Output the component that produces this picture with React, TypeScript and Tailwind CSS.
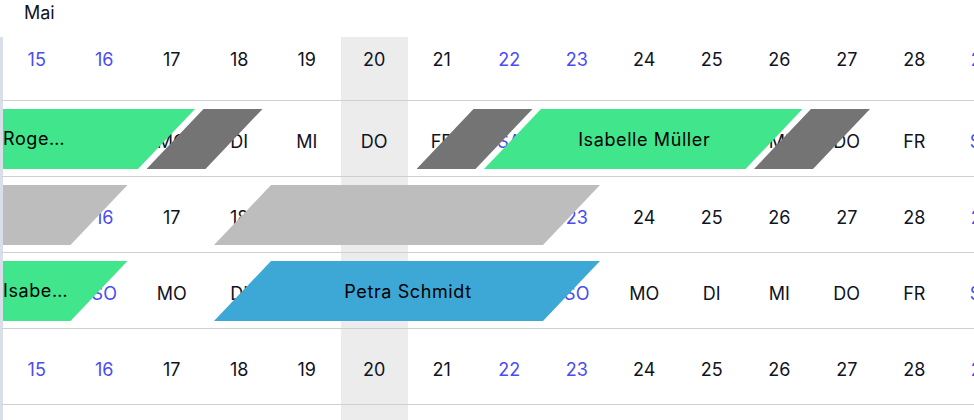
const days = [15, 16, 17, 18, 19, 20, 21, 22, 23, 24, 25, 26, 27, 28, 29]
const labels = ["SA", "SO", "MO", "DI", "MI", "DO", "FR", "SA", "SO", "MO", "DI", "MI", "DO", "FR", "SA"]
const weekend = [0, 1, 7, 8, 14]

const COL = 67.5
const SLANT = 57

type Bar = {
    start: number
    span: number
    color: string
    label?: string
    // width class of the visible label when the bar starts left of the view
    cut?: string
}

const rows: { kind: "date" | "day"; bars: Bar[] }[] = [
    {
        kind: "day",
        bars: [
            { start: -2, span: 4, color: "bg-[#41e68c]", label: "Roger Baumann", cut: "w-[64px]" },
            { start: 2, span: 1, color: "bg-[#747474]" },
            { start: 6, span: 1, color: "bg-[#747474]" },
            { start: 7, span: 4, color: "bg-[#41e68c]", label: "Isabelle Müller" },
            { start: 11, span: 1, color: "bg-[#747474]" },
        ],
    },
    {
        kind: "date",
        bars: [
            { start: -3, span: 4, color: "bg-[#bdbdbd]" },
            { start: 3, span: 5, color: "bg-[#bdbdbd]" },
        ],
    },
    {
        kind: "day",
        bars: [
            { start: -3, span: 4, color: "bg-[#41e68c]", label: "Isabelle Müller", cut: "w-[68px]" },
            { start: 3, span: 5, color: "bg-[#3da8d5]", label: "Petra Schmidt" },
        ],
    },
    { kind: "date", bars: [] },
    { kind: "day", bars: [] },
]

function Cell({ i, children, header }: { i: number; children: React.ReactNode; header?: boolean }) {
    return (
        <div
            className={`w-[67.5px] shrink-0 flex justify-center items-center ${header ? "pb-[19px]" : "pt-[6px]"} ${i === 5 ? "bg-[#ececec]" : ""} ${weekend.includes(i) ? "text-[#4a4cf2]" : "text-[#101322]"}`}
        >
            {children}
        </div>
    )
}

function BarShape({ bar }: { bar: Bar }) {
    const left = bar.start * COL + 8.5
    const width = bar.span * COL - 8.5 + SLANT
    return (
        <>
            <div
                className={`absolute top-[8px] h-[60px] flex items-center justify-center text-black tracking-[0.6px] [clip-path:polygon(57px_0,100%_0,calc(100%-57px)_100%,0_100%)] ${bar.color}`}
                style={{ left, width }}
            >
                {bar.label && !bar.cut && <span className="pl-[2px]">{bar.label}</span>}
            </div>
            {bar.label && bar.cut && (
                <span
                    className={`absolute left-0 top-[8px] h-[60px] leading-[60px] truncate text-black tracking-[0.6px] ${bar.cut}`}
                >
                    {bar.label}
                </span>
            )}
        </>
    )
}

export default function App() {
    return (
        <main className="w-[974px] h-[420px] overflow-hidden bg-white text-[18px] font-['Inter',sans-serif]">
            <div className="h-[37px] pl-[24px] leading-[25px] text-[#101322]">Mai</div>

            <div className="flex h-[64px] border-b border-l-[3px] border-b-[#cfcfcf] border-l-[#d9dfe9] overflow-hidden">
                {days.map((d, i) => (
                    <Cell key={d} i={i} header>
                        {d}
                    </Cell>
                ))}
            </div>

            {rows.map((row, r) => (
                <div
                    key={r}
                    className="relative flex h-[76px] border-b border-l-[3px] border-b-[#cfcfcf] border-l-[#d9dfe9] overflow-hidden"
                >
                    {days.map((d, i) => (
                        <Cell key={d} i={i}>
                            {row.kind === "date" ? d : labels[i]}
                        </Cell>
                    ))}
                    {row.bars.map((b, k) => (
                        <BarShape key={k} bar={b} />
                    ))}
                </div>
            ))}
        </main>
    )
}
